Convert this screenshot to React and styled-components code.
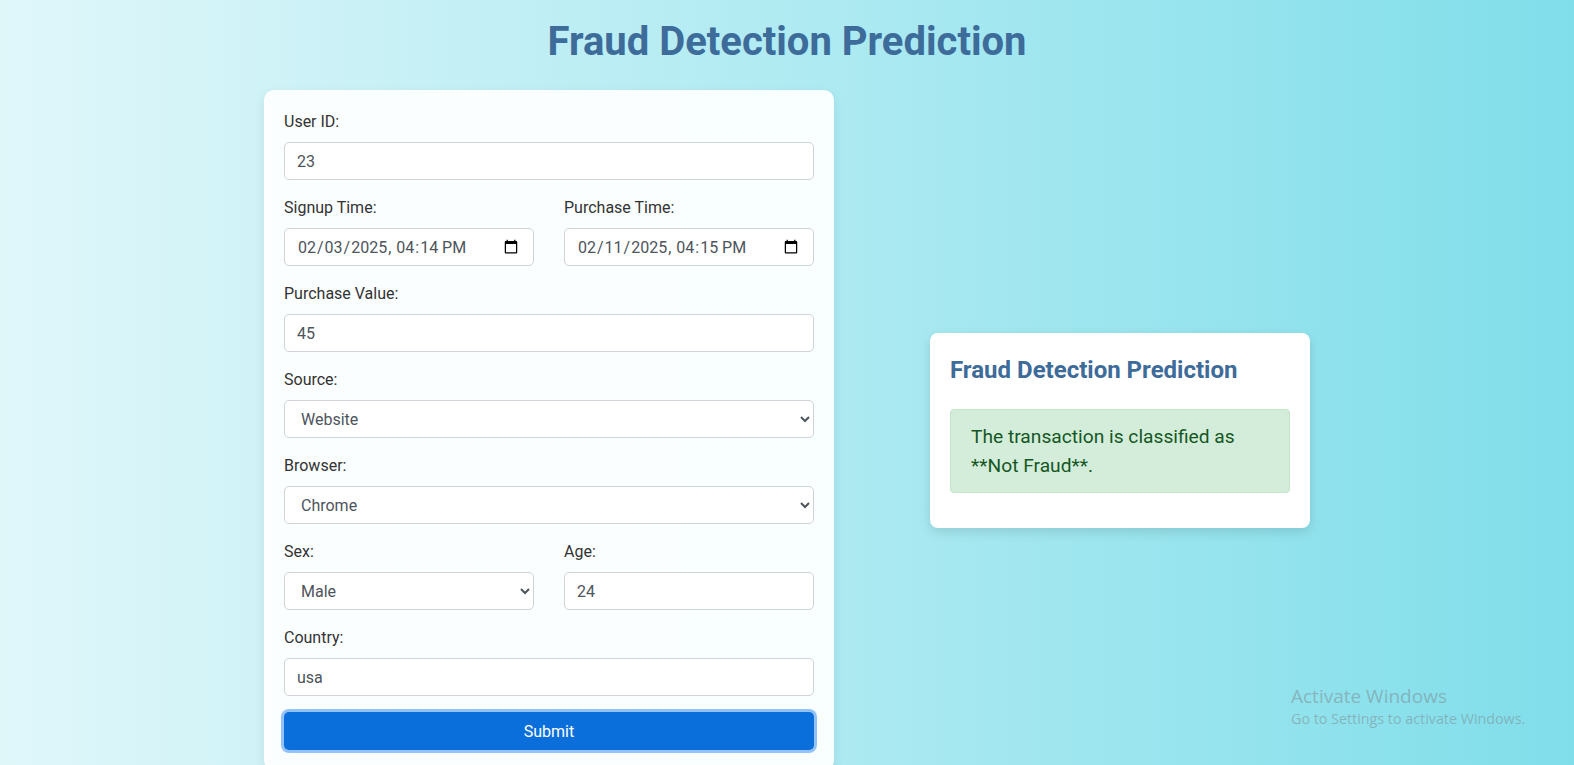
import React, { useState } from 'react';
import styled, { createGlobalStyle } from 'styled-components';

const GlobalStyle = createGlobalStyle`
* { box-sizing: border-box; }
html, body { margin: 0; padding: 0; }
body {
  font-family: Roboto, "Liberation Sans", sans-serif;
  background: linear-gradient(to right, #e0f7fa, #80deea);
  min-height: 100vh;
  color: #333;
  overflow: hidden;
}
`

const Page = styled.div`
position: relative;
min-height: 100vh;
padding-top: 18px;
`
const Title = styled.h1`
margin: 0 0 24px;
font-size: 40px;
line-height: 48px;
font-weight: 700;
text-align: center;
color: #3d6b9a;
`
const Main = styled.div`
display: flex;
align-items: center;
gap: 96px;
padding-left: 264px;
`
const FormCard = styled.form`
width: 570px;
padding: 20px;
background-color: rgba(255,255,255,0.92);
border-radius: 10px;
box-shadow: 0 4px 12px rgba(0,0,0,0.08);
`
const Group = styled.div`
margin-bottom: 16px;
`
const Row = styled.div`
display: grid;
grid-template-columns: 1fr 1fr;
column-gap: 30px;
`
const Label = styled.label`
display: block;
font-size: 16px;
line-height: 24px;
margin-bottom: 8px;
color: #333;
`
const fieldCss = `
display: block;
width: 100%;
height: 38px;
padding: 6px 12px;
font-family: Roboto, "Liberation Sans", sans-serif;
font-size: 16px;
color: #4d545c;
background-color: #fff;
border: 1px solid #ced4da;
border-radius: 5px;
outline: none;
`
const Input = styled.input`
${fieldCss}
`
const Select = styled.select`
${fieldCss}
padding-right: 6px;
`
const SubmitButton = styled.button`
display: block;
width: 100%;
height: 38px;
border: none;
border-radius: 5px;
background-color: #0a6fdb;
color: #fff;
font-family: Roboto, "Liberation Sans", sans-serif;
font-size: 16px;
box-shadow: 0 0 0 3px #93c2fb;
cursor: pointer;
`
const ResultCard = styled.div`
width: 380px;
padding: 23px 20px 20px;
background-color: #fff;
border-radius: 8px;
box-shadow: 0 4px 12px rgba(0,0,0,0.12);
h3 {
  margin: 0 0 24px;
  font-size: 24px;
  line-height: 29px;
  font-weight: 700;
  color: #3d6b9a;
}
`
const Alert = styled.div`
padding: 12px 20px;
margin-bottom: 15px;
font-size: 19.2px;
line-height: 29px;
color: #155724;
background-color: #d4edda;
border: 1px solid #c3e6cb;
border-radius: 4px;
`
const Watermark = styled.div`
position: absolute;
left: 1291px;
top: 683px;
font-family: "Open Sans", "Noto Sans", sans-serif;
color: rgba(125,135,140,0.5);
div:first-child { font-size: 19px; line-height: 26px; }
div:last-child { font-size: 14.3px; line-height: 20px; }
`

const App = () => {
  const [form, setForm] = useState({
    userId: '23',
    signup: '2025-02-03T16:14',
    purchase: '2025-02-11T16:15',
    value: '45',
    source: 'Website',
    browser: 'Chrome',
    sex: 'Male',
    age: '24',
    country: 'usa',
  });
  const update = (key) => (e) => setForm({ ...form, [key]: e.target.value });

  return (
    <Page>
      <GlobalStyle />
      <Title>Fraud Detection Prediction</Title>
      <Main>
        <FormCard onSubmit={(e) => e.preventDefault()}>
          <Group>
            <Label>User ID:</Label>
            <Input type="number" value={form.userId} onChange={update('userId')} />
          </Group>
          <Row>
            <Group>
              <Label>Signup Time:</Label>
              <Input type="datetime-local" value={form.signup} onChange={update('signup')} />
            </Group>
            <Group>
              <Label>Purchase Time:</Label>
              <Input type="datetime-local" value={form.purchase} onChange={update('purchase')} />
            </Group>
          </Row>
          <Group>
            <Label>Purchase Value:</Label>
            <Input type="number" value={form.value} onChange={update('value')} />
          </Group>
          <Group>
            <Label>Source:</Label>
            <Select value={form.source} onChange={update('source')}>
              <option>Website</option>
              <option>SEO</option>
              <option>Ads</option>
              <option>Direct</option>
            </Select>
          </Group>
          <Group>
            <Label>Browser:</Label>
            <Select value={form.browser} onChange={update('browser')}>
              <option>Chrome</option>
              <option>Firefox</option>
              <option>Safari</option>
              <option>IE</option>
              <option>Opera</option>
            </Select>
          </Group>
          <Row>
            <Group>
              <Label>Sex:</Label>
              <Select value={form.sex} onChange={update('sex')}>
                <option>Male</option>
                <option>Female</option>
              </Select>
            </Group>
            <Group>
              <Label>Age:</Label>
              <Input type="number" value={form.age} onChange={update('age')} />
            </Group>
          </Row>
          <Group>
            <Label>Country:</Label>
            <Input type="text" value={form.country} onChange={update('country')} />
          </Group>
          <SubmitButton type="submit">Submit</SubmitButton>
        </FormCard>
        <ResultCard>
          <h3>Fraud Detection Prediction</h3>
          <Alert>The transaction is classified as **Not Fraud**.</Alert>
        </ResultCard>
      </Main>
      <Watermark>
        <div>Activate Windows</div>
        <div>Go to Settings to activate Windows.</div>
      </Watermark>
    </Page>
  );
};

export default App;
